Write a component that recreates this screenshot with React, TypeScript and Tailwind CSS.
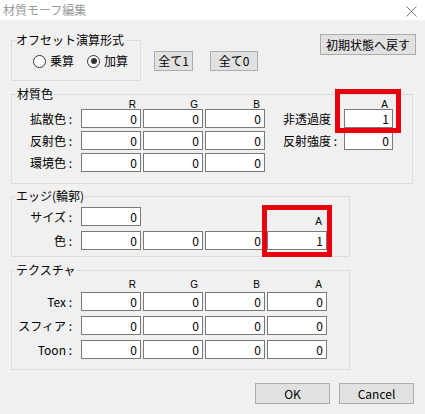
import React from 'react';

const Field: React.FC<{ value: string; w?: string }> = ({ value, w = 'w-[60px]' }) => (
  <div className={`${w} h-[19px] bg-white border border-[#7a7a7a] text-right pr-[3px] leading-[17px] text-[12px] text-black`}>
    {value}
  </div>
);

const Btn: React.FC<{ label: string; w: string; h?: string }> = ({ label, w, h = 'h-[20px]' }) => (
  <div className={`${w} ${h} bg-[#e1e1e1] border border-[#adadad] flex items-center justify-center text-[12px] text-black whitespace-nowrap`}>
    {label}
  </div>
);

const Radio: React.FC<{ checked?: boolean; label: string }> = ({ checked, label }) => (
  <div className="flex items-center gap-[4px]">
    <div className="w-[13px] h-[13px] rounded-full border border-[#333] bg-white flex items-center justify-center">
      {checked && <div className="w-[6px] h-[6px] rounded-full bg-[#333]" />}
    </div>
    <span>{label}</span>
  </div>
);

const Label: React.FC<{ text: string; w?: string }> = ({ text, w = 'w-[69px]' }) => (
  <div className={`${w} shrink-0 text-right pr-[9px] leading-[19px] whitespace-nowrap`}>{text}</div>
);

const Head: React.FC<{ text: string; w?: string }> = ({ text, w = 'w-[60px]' }) => (
  <div className={`${w} text-right pr-[5px] font-['Liberation_Sans',sans-serif] text-[10px] leading-[8px]`}>{text}</div>
);

export default function App() {
  return (
    <div className="relative w-[425px] h-[414px] bg-[#f0f0f0] overflow-hidden font-['Noto_Sans_CJK_JP',sans-serif] text-[12px] text-black">
      {/* title bar */}
      <div className="h-[20px] bg-white flex items-center justify-between pl-[3px] pr-[8px]">
        <span className="text-[#9a9a9a] text-[12px] leading-[14px]">材質モーフ編集</span>
        <svg width="11" height="11" viewBox="0 0 11 11" className="mt-[2px]">
          <path d="M0.5 0.5 L10.5 10.5 M10.5 0.5 L0.5 10.5" stroke="#777" strokeWidth="1" />
        </svg>
      </div>

      <div className="pl-[11px] pr-[9px]">
        {/* offset row */}
        <div className="flex mt-[13px]">
          <fieldset className="w-[130px] h-[48px] border border-[#dcdcdc]">
            <legend className="ml-[3px] px-[1px] leading-[14px]">オフセット演算形式</legend>
            <div className="flex gap-[13px] pl-[21px] mt-[5px]">
              <Radio label="乗算" />
              <Radio checked label="加算" />
            </div>
          </fieldset>
          <div className="flex gap-[17px] ml-[13px] mt-[18px]">
            <Btn label="全て1" w="w-[39px]" />
            <Btn label="全て0" w="w-[48px]" />
          </div>
          <div className="ml-auto mt-[1px]">
            <Btn label="初期状態へ戻す" w="w-[96px]" h="h-[21px]" />
          </div>
        </div>

        {/* material colour */}
        <fieldset className="w-[402px] h-[97px] mt-[6px] border border-[#dcdcdc]">
          <legend className="ml-[4px] px-[1px] leading-[14px]">材質色</legend>
          <div className="flex">
            <div className="w-[69px]" />
            <div className="flex gap-[2px]">
              <Head text="R" />
              <Head text="G" />
              <Head text="B" />
            </div>
            <div className="w-[79px]" />
            <Head text="A" w="w-[49px]" />
          </div>
          <div className="flex flex-col gap-[3px]">
            <div className="flex">
              <Label text="拡散色 :" />
              <div className="flex gap-[2px]">
                <Field value="0" />
                <Field value="0" />
                <Field value="0" />
              </div>
              <div className="w-[18px]" />
              <div className="w-[61px] leading-[19px]">非透過度</div>
              <Field value="1" w="w-[49px]" />
            </div>
            <div className="flex">
              <Label text="反射色 :" />
              <div className="flex gap-[2px]">
                <Field value="0" />
                <Field value="0" />
                <Field value="0" />
              </div>
              <div className="w-[18px]" />
              <div className="w-[61px] leading-[19px]">反射強度 :</div>
              <Field value="0" w="w-[49px]" />
            </div>
            <div className="flex">
              <Label text="環境色 :" />
              <div className="flex gap-[2px]">
                <Field value="0" />
                <Field value="0" />
                <Field value="0" />
              </div>
            </div>
          </div>
        </fieldset>

        {/* edge */}
        <fieldset className="w-[339px] h-[68px] mt-[5px] border border-[#dcdcdc]">
          <legend className="ml-[3px] px-[1px] leading-[14px]">エッジ(輪郭)</legend>
          <div className="flex mt-[4px]">
            <Label text="サイズ :" />
            <Field value="0" />
            <div className="w-[126px]" />
            <div className="flex items-end">
              <Head text="A" />
            </div>
          </div>
          <div className="flex mt-[5px]">
            <Label text="色 :" />
            <div className="flex gap-[2px]">
              <Field value="0" />
              <Field value="0" />
              <Field value="0" />
              <Field value="1" />
            </div>
          </div>
        </fieldset>

        {/* texture */}
        <fieldset className="w-[339px] h-[107px] mt-[6px] border border-[#dcdcdc]">
          <legend className="ml-[3px] px-[1px] leading-[14px]">テクスチャ</legend>
          <div className="flex mt-[4px]">
            <div className="w-[69px]" />
            <div className="flex gap-[2px]">
              <Head text="R" />
              <Head text="G" />
              <Head text="B" />
              <Head text="A" />
            </div>
          </div>
          <div className="flex flex-col gap-[5px] mt-[3px]">
            {['Tex :', 'スフィア :', 'Toon :'].map((l, i) => (
              <div key={l} className={`flex ${i === 2 ? 'pl-[1px]' : ''}`}>
                <Label text={l} w={i === 2 ? 'w-[68px]' : 'w-[69px]'} />
                <div className="flex gap-[2px]">
                  <Field value="0" />
                  <Field value="0" />
                  <Field value="0" />
                  <Field value="0" />
                </div>
              </div>
            ))}
          </div>
        </fieldset>

        {/* OK / Cancel */}
        <div className="flex justify-end gap-[9px] mt-[13px] pr-[2px]">
          <Btn label="OK" w="w-[75px]" h="h-[21px]" />
          <Btn label="Cancel" w="w-[75px]" h="h-[21px]" />
        </div>
      </div>

      {/* red highlight annotations */}
      <div className="absolute left-[335px] top-[89px] w-[66px] h-[44px] border-[5px] border-[#e8000e]" />
      <div className="absolute left-[262px] top-[205px] w-[70px] h-[52px] border-[5px] border-[#e8000e]" />
    </div>
  );
}
